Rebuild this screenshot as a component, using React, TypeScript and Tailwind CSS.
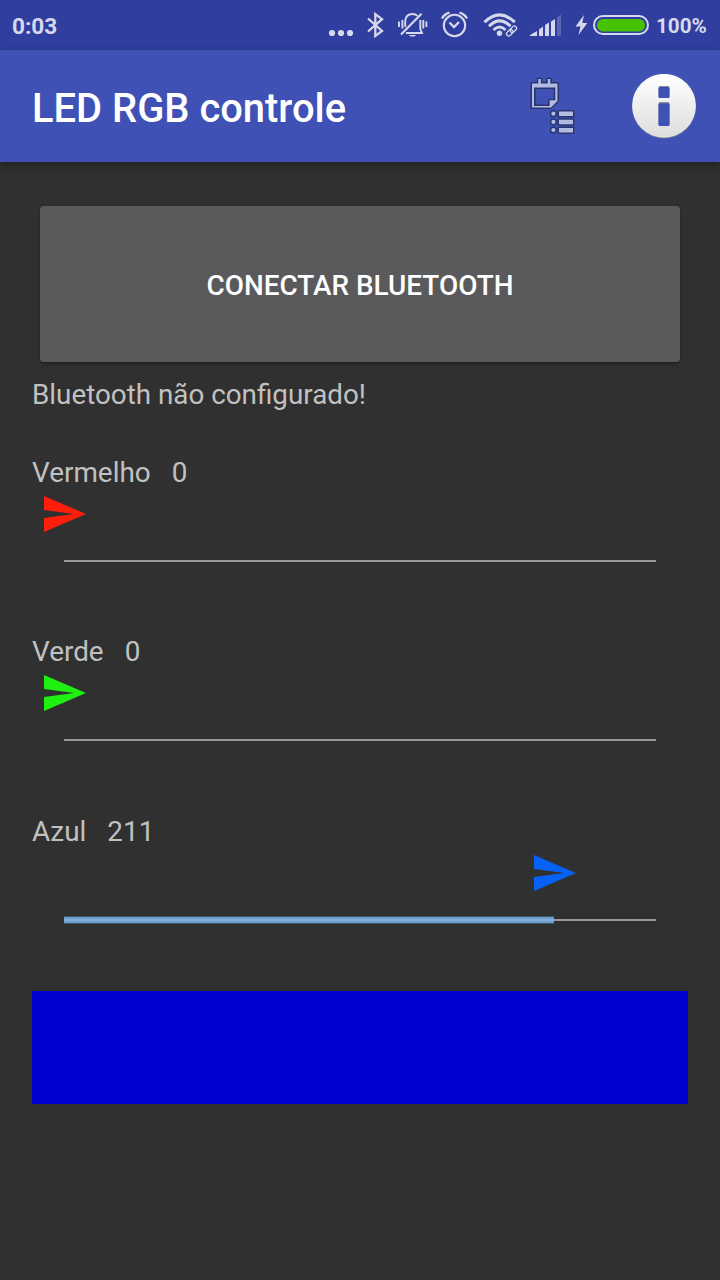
import React from 'react';

const INK = '#d6d9ec';

function StatusIcon({ x, w, children }: { x: number; w: number; children: React.ReactNode }) {
  return (
    <svg width={w} height={50} viewBox={`${x} 0 ${w} 50`} className="block shrink-0" fill="none" stroke={INK}>
      {children}
    </svg>
  );
}

function StatusBar() {
  return (
    <div className="flex h-[50px] items-center bg-[#303f9f] pl-3 text-[#d6d9ec]">
      <span className="w-[314px] shrink-0 pt-[3px] text-[22.6px] leading-7 font-bold">0:03</span>
      <StatusIcon x={326} w={32}>
        <g fill={INK} stroke="none">
          <circle cx="332" cy="33" r="3.1" />
          <circle cx="341" cy="33" r="3.1" />
          <circle cx="350" cy="33" r="3.1" />
        </g>
      </StatusIcon>
      <StatusIcon x={358} w={36}>
        <path d="M368 18.5 L382 31 L375.3 36 V14 L382 19.2 L368 31.5" strokeWidth="2.3" />
      </StatusIcon>
      <StatusIcon x={394} w={38}>
        <path d="M399 21.5V27M402.4 20V28.5M405.2 27V22C405.2 17 408 14 412.5 14C414.5 14 416.2 14.6 417.4 15.8M420.3 20V29L422 33H406" strokeWidth="1.9" />
        <path d="M423.3 20V28.5M426.4 21.5V27" strokeWidth="1.9" />
        <path d="M401 34.5L421.5 13.7" strokeWidth="2.1" />
        <path d="M409 35H416C415 37 410 37 409 35Z" fill={INK} stroke="none" />
      </StatusIcon>
      <StatusIcon x={432} w={44}>
        <circle cx="454.5" cy="25.5" r="10.7" strokeWidth="2.1" />
        <path d="M442 18.5Q444.5 14 449.5 12.7M459.5 12.7Q464.5 14 467 18.5" strokeWidth="2.3" />
        <path d="M449.5 22.5L454 27L459 22" strokeWidth="2.3" />
      </StatusIcon>
      <StatusIcon x={476} w={46}>
        <path d="M484.5 22.2Q499.5 7.5 514.8 22.2M489 26.2Q499.5 15.5 510.5 26.2M493.5 30Q499.5 24 505.5 30" strokeWidth="3" />
        <circle cx="499.5" cy="33.2" r="2.7" fill={INK} stroke="none" />
        <g transform="rotate(-45 511.5 31)" strokeWidth="1.3">
          <rect x="505.4" y="28.8" width="7.3" height="4.4" rx="2.2" />
          <rect x="510.4" y="28.8" width="7.3" height="4.4" rx="2.2" />
        </g>
      </StatusIcon>
      <StatusIcon x={522} w={48}>
        <g fill={INK} stroke="none">
          <path d="M530 36V35L537 31V36ZM539 36V29.5L543 26.5V36ZM545 36V25L549 22.5V36ZM551 36V21.5L555 19V36Z" />
          <path d="M557 36V17L561 14.5V36Z" opacity="0.25" />
        </g>
      </StatusIcon>
      <StatusIcon x={570} w={22}>
        <path d="M584 15L575.5 26.5H580.5L578.5 35L587.3 23H582.3Z" fill={INK} stroke="none" />
      </StatusIcon>
      <StatusIcon x={592} w={64}>
        <rect x="594" y="16" width="54" height="18" rx="9" strokeWidth="2" />
        <rect x="597" y="19" width="48" height="12.5" rx="6.25" fill="#47c200" stroke="none" />
      </StatusIcon>
      <span className="pt-[2px] text-[20.7px] leading-7 font-bold">100%</span>
    </div>
  );
}

function NotesListIcon() {
  return (
    <svg width="48" height="60" viewBox="528 76 48 60" className="block">
      <g fill="#29356f" stroke="#29356f" strokeWidth="3" strokeLinejoin="round">
        <path d="M532 83.5H538.3V79H540.8V83.5H547.8V79H550.3V83.5H557.5V101L551 107.5H532Z" />
        <circle cx="553.4" cy="113.7" r="2.1" />
        <circle cx="553.4" cy="121.9" r="2.1" />
        <circle cx="553.4" cy="130" r="2.1" />
        <path d="M559 111.5H573V116H559ZM559 119.7H573V124.2H559ZM559 127.9H573V132.4H559Z" />
      </g>
      <g fill="#b3bbe3">
        <path d="M532 83.5H538.3V79H540.8V83.5H547.8V79H550.3V83.5H557.5V101L551 107.5H532Z" />
        <circle cx="553.4" cy="113.7" r="2.1" />
        <circle cx="553.4" cy="121.9" r="2.1" />
        <circle cx="553.4" cy="130" r="2.1" />
        <path d="M559 111.5H573V116H559ZM559 119.7H573V124.2H559ZM559 127.9H573V132.4H559Z" />
      </g>
      <path d="M534.8 88.2H554.5V99.8H549V105.2H534.8Z" fill="#3f51b5" stroke="#29356f" strokeWidth="1.6" />
      <path d="M550.5 105.5V101.2H555" fill="none" stroke="#b3bbe3" strokeWidth="1.5" />
    </svg>
  );
}

function InfoIcon() {
  return (
    <svg width="64" height="65" viewBox="0 0 64 65" className="block">
      <defs>
        <linearGradient id="disc" x1="0" y1="0" x2="0" y2="1">
          <stop offset="0" stopColor="#ffffff" />
          <stop offset="1" stopColor="#dddddd" />
        </linearGradient>
      </defs>
      <circle cx="32" cy="32.5" r="31.8" fill="#81858f" />
      <circle cx="32" cy="31.8" r="31.9" fill="url(#disc)" />
      <rect x="26.5" y="12" width="11" height="12" rx="1.8" fill="#858993" />
      <rect x="26.5" y="28" width="11" height="24" rx="1.8" fill="#858993" />
      <rect x="26.5" y="13" width="11" height="11" rx="1.5" fill="#3f51b5" />
      <rect x="26.5" y="29.3" width="11" height="22.7" rx="1.5" fill="#3f51b5" />
    </svg>
  );
}

function AppBar() {
  return (
    <header className="flex h-28 items-center bg-[#3f51b5] pr-6 pl-8 shadow-[0_3px_10px_rgba(0,0,0,0.35)]">
      <h1 className="flex-1 pt-1.5 text-[39.9px] leading-[48px] font-medium text-white">LED RGB controle</h1>
      <NotesListIcon />
      <div className="ml-14">
        <InfoIcon />
      </div>
    </header>
  );
}

type Channel = { label: string; value: number; color: string; gap: string };

const channels: Channel[] = [
  { label: 'Vermelho', value: 0, color: '#ff1d0b', gap: 'mt-10' },
  { label: 'Verde', value: 0, color: '#1ff011', gap: 'mt-[70px]' },
  { label: 'Azul', value: 211, color: '#0562f5', gap: 'mt-[71px]' },
];

function ChannelSlider({ label, value, color, gap }: Channel) {
  const filled = Math.round((value / 255) * 592);
  return (
    <section className={gap}>
      <div className="flex h-[38px] items-center gap-[21px] text-[27.9px] leading-[38px] text-[#c1c1c1]">
        <span>{label}</span>
        <span>{value}</span>
      </div>
      <div className="flex h-[71px] flex-col pt-1 pl-8">
        <svg width="42" height="36" viewBox="0 0 42 36" className="block shrink-0" style={{ marginLeft: filled - 20 }}>
          <path d="M0 0L42 18L0 36V22L30 18L0 14Z" fill={color} />
        </svg>
        <div className="mt-[25px] flex h-2 w-[592px] items-center">
          <div
            className="h-2 bg-[linear-gradient(to_bottom,#435866_0_1px,#6da0cb_1px_3px,#83b0db_3px_5px,#6da0cb_5px_7px,#435866_7px_8px)]"
            style={{ width: filled }}
          />
          <div className="h-[2px] flex-1 bg-[#989898]" />
        </div>
      </div>
    </section>
  );
}

export default function App() {
  return (
    <div className="flex h-[1280px] w-[720px] flex-col overflow-hidden bg-[#303030] font-['Roboto',sans-serif]">
      <StatusBar />
      <AppBar />
      <main className="flex flex-col px-8 pt-11">
        <button className="mx-2 h-[156px] rounded bg-[#5a5a5c] pt-1 text-[27.9px] font-medium text-white shadow-[0_2px_3px_rgba(0,0,0,0.3)]">
          CONECTAR BLUETOOTH
        </button>
        <p className="mt-3.5 h-[38px] text-[27.8px] leading-[38px] text-[#c1c1c1]">Bluetooth não configurado!</p>
        {channels.map((c) => (
          <ChannelSlider key={c.label} {...c} />
        ))}
        <div className="mt-[69px] h-[113px] bg-[#0000d3]" />
      </main>
    </div>
  );
}
